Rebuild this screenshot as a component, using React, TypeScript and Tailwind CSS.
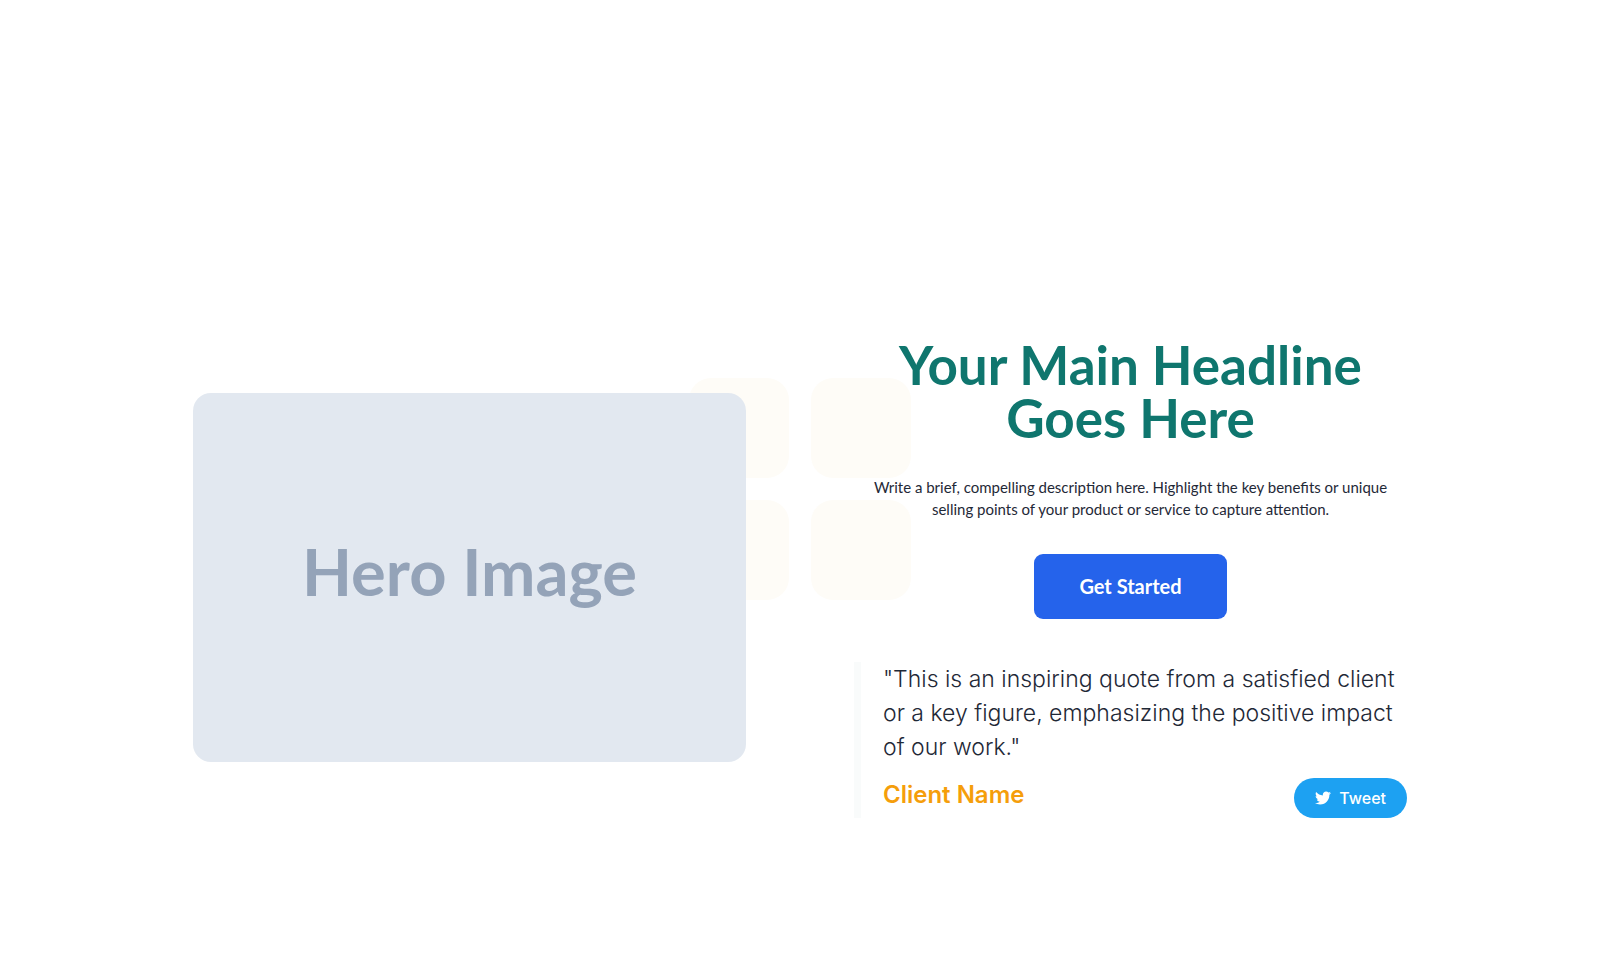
import { FaTwitter } from 'react-icons/fa';

const tiles = [1, 2, 3, 4];

function TilePattern() {
  return (
    <div aria-hidden="true" className="absolute inset-0 -z-10 flex items-center justify-center">
      <div className="grid grid-cols-2 gap-[22px]">
        {tiles.map((tile) => (
          <div key={tile} className="size-[100px] rounded-[22px] bg-[#fefcf7]" />
        ))}
      </div>
    </div>
  );
}

function Testimonial() {
  return (
    <figure className="border-l-7 border-[#f9fbfb] pl-[22px] font-['Inter',sans-serif]">
      <blockquote className="text-[23px] leading-[34px] font-light text-[#1f2937]">
        "This is an inspiring quote from a satisfied client or a key figure, emphasizing the positive impact of our work."
      </blockquote>
      <div className="mt-3.5 flex items-start justify-between">
        <figcaption className="text-2xl leading-[34px] font-semibold text-[#f59e0b]">Client Name</figcaption>
        <button
          type="button"
          className="flex h-10 items-center gap-2 rounded-full bg-[#1da1f2] px-[21px] text-base font-medium text-white"
        >
          <FaTwitter size={16} />
          Tweet
        </button>
      </div>
    </figure>
  );
}

export default function App() {
  return (
    <main className="relative isolate flex min-h-screen items-center justify-center bg-white px-6 pt-[177px]">
      <TilePattern />
      <section className="grid w-full max-w-[1214px] grid-cols-1 items-center gap-[108px] lg:grid-cols-2">
        <div
          role="img"
          aria-label="Hero Image"
          className="flex aspect-3/2 items-center justify-center rounded-[18px] bg-[#e2e8f0] pb-3 font-['Lato',sans-serif] text-[65px] font-bold text-[#94a3b8]"
        >
          Hero Image
        </div>

        <div>
          <div className="flex flex-col items-center text-center font-['Lato',sans-serif]">
            <h1 className="max-w-[500px] text-[53px] leading-[53px] font-bold text-[#0f766e]">Your Main Headline Goes Here</h1>
            <p className="mt-8 max-w-[540px] text-[15px] leading-[22px] text-[#1f2937]">
              Write a brief, compelling description here. Highlight the key benefits or unique selling points of your
              product or service to capture attention.
            </p>
            <button
              type="button"
              className="mt-[34px] mb-[43px] h-[65px] rounded-[9px] bg-[#2563eb] px-[45px] text-xl font-bold text-white"
            >
              Get Started
            </button>
          </div>
          <Testimonial />
        </div>
      </section>
    </main>
  );
}
